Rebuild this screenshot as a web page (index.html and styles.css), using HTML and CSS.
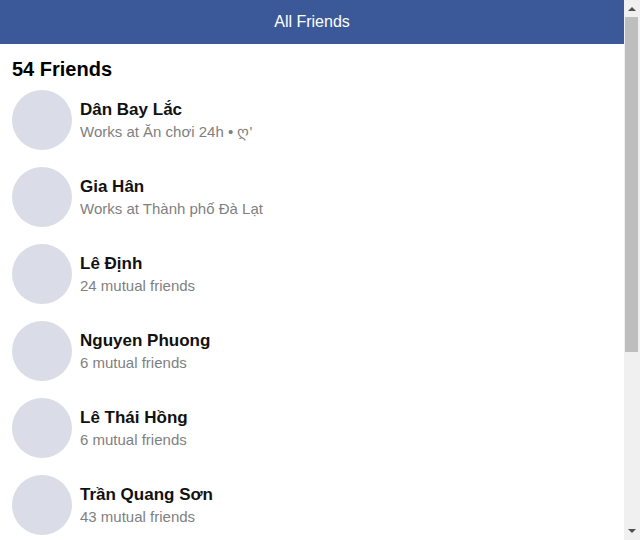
FILE: index.html
```html
<!DOCTYPE html>
<html lang="vi">
<head>
<meta charset="utf-8">
<title>All Friends</title>
<link rel="stylesheet" href="styles.css">
</head>
<body>
<header class="topbar">All Friends</header>
<main class="content">
  <h1 class="count">54 Friends</h1>
  <ul class="friends">
    <li class="friend"><div class="avatar"></div><div class="info"><div class="name">Dân Bay Lắc</div><div class="meta">Works at Ăn chơi 24h • ღ'</div></div></li>
    <li class="friend"><div class="avatar"></div><div class="info"><div class="name">Gia Hân</div><div class="meta">Works at Thành phố Đà Lạt</div></div></li>
    <li class="friend"><div class="avatar"></div><div class="info"><div class="name">Lê Định</div><div class="meta">24 mutual friends</div></div></li>
    <li class="friend"><div class="avatar"></div><div class="info"><div class="name">Nguyen Phuong</div><div class="meta">6 mutual friends</div></div></li>
    <li class="friend"><div class="avatar"></div><div class="info"><div class="name">Lê Thái Hồng</div><div class="meta">6 mutual friends</div></div></li>
    <li class="friend"><div class="avatar"></div><div class="info"><div class="name">Trần Quang Sơn</div><div class="meta">43 mutual friends</div></div></li>
    <li class="friend"><div class="avatar"></div><div class="info"><div class="name">Phạm Minh Tuấn</div><div class="meta">12 mutual friends</div></div></li>
    <li class="friend"><div class="avatar"></div><div class="info"><div class="name">Nguyễn Thu Trang</div><div class="meta">8 mutual friends</div></div></li>
    <li class="friend"><div class="avatar"></div><div class="info"><div class="name">Hoàng Văn Nam</div><div class="meta">15 mutual friends</div></div></li>
  </ul>
</main>
<div class="scrollbar" aria-hidden="true">
  <svg class="arrow" width="16" height="17" viewBox="0 0 16 17"><polygon points="4,11 12,11 8,7" fill="#505050"/></svg>
  <div class="track"><div class="thumb"></div></div>
  <svg class="arrow" width="16" height="17" viewBox="0 0 16 17"><polygon points="4,6 12,6 8,10" fill="#505050"/></svg>
</div>
</body>
</html>
```
FILE: styles.css
```css
html, body {
  margin: 0;
  padding: 0;
  background: #ffffff;
  font-family: "Liberation Sans", Arial, "Noto Sans", sans-serif;
}

body {
  margin-right: 16px;
}

.topbar {
  height: 44px;
  line-height: 44px;
  background: #3b5998;
  color: #ffffff;
  text-align: center;
  font-size: 16px;
}

.content {
  padding: 13px 12px 8px;
}

.count {
  margin: 0 0 9px;
  font-size: 20px;
  line-height: 24px;
  font-weight: bold;
  color: #000000;
}

.friends {
  list-style: none;
  margin: 0;
  padding: 0;
  display: flex;
  flex-direction: column;
  gap: 17px;
}

.friend {
  display: flex;
  align-items: center;
  gap: 8px;
  height: 60px;
}

.avatar {
  width: 60px;
  height: 60px;
  border-radius: 50%;
  background: #dadde7;
  flex: none;
}

.info {
  display: flex;
  flex-direction: column;
  padding-top: 2px;
}

.name {
  font-size: 17px;
  line-height: 22px;
  font-weight: bold;
  color: #111111;
}

.meta {
  font-size: 15px;
  line-height: 22px;
  color: #7f7f7f;
}

.scrollbar {
  position: fixed;
  top: 0;
  right: 0;
  width: 16px;
  height: 100vh;
  background: #f0f0f0;
  display: flex;
  flex-direction: column;
}

.arrow {
  display: block;
  flex: none;
}

.track {
  flex: 1;
  padding: 0 2px 0 1px;
}

.thumb {
  height: 335px;
  background: #bebebe;
}
```
